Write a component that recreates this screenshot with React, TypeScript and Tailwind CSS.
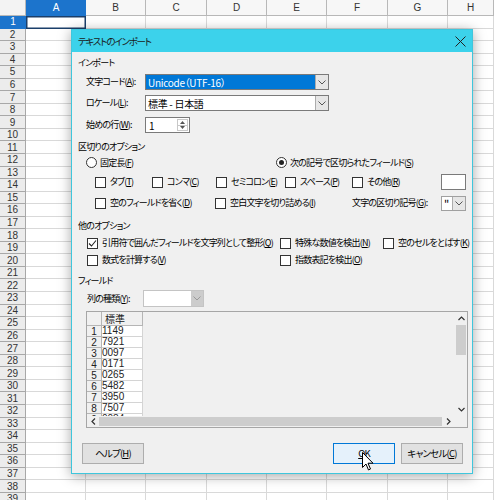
import React from 'react';

const cols = ['A', 'B', 'C', 'D', 'E', 'F', 'G', 'H'];
const rows = Array.from({ length: 39 }, (_, i) => i + 1);
const preview = ['1149', '7921', '0097', '0171', '0265', '5482', '3950', '7507', '0084'];

// アクセスキー付きラベル
const Key = ({ text, k, colon }: { text: string; k: string; colon?: boolean }) => (
  <span className="whitespace-nowrap">
    {text}(<u>{k}</u>){colon ? ':' : ''}
  </span>
);

const Chevron = ({ color = '#555' }: { color?: string }) => (
  <svg width="8" height="5" viewBox="0 0 8 5">
    <path d="M0.5 0.5 L4 4 L7.5 0.5" fill="none" stroke={color} strokeWidth="1" />
  </svg>
);

const CheckBox = ({ checked, children }: { checked?: boolean; children: React.ReactNode }) => (
  <div className="flex items-center gap-[4px]">
    <div className="w-[11px] h-[11px] border border-[#333] bg-white flex items-center justify-center shrink-0">
      {checked && (
        <svg width="9" height="9" viewBox="0 0 9 9">
          <path d="M1 4.5 L3.5 7 L8 1.5" fill="none" stroke="#222" strokeWidth="1.1" />
        </svg>
      )}
    </div>
    {children}
  </div>
);

const Radio = ({ checked, children }: { checked?: boolean; children: React.ReactNode }) => (
  <div className="flex items-center gap-[3px]">
    <div className="w-[11px] h-[11px] rounded-full border border-[#333] bg-white flex items-center justify-center shrink-0">
      {checked && <div className="w-[5px] h-[5px] rounded-full bg-[#222]" />}
    </div>
    {children}
  </div>
);

const Combo = ({ value, selected }: { value: string; selected?: boolean }) => (
  <div className="w-[184px] h-[16px] border border-[#7a7a7a] bg-white flex text-[10px] tracking-[-0.3px]">
    <div
      className={
        selected
          ? 'flex-1 bg-[#0078d7] text-white pl-[2px] flex items-center'
          : 'flex-1 bg-white pl-[2px] flex items-center'
      }
    >
      {value}
    </div>
    <div className="w-[13px] border-l border-[#acacac] bg-[#e6e6e6] flex items-center justify-center">
      <Chevron />
    </div>
  </div>
);

function Sheet() {
  return (
    <div className="grid grid-cols-[26px_60px_60px_61px_60px_60px_61px_60px_1fr] grid-rows-[16px_repeat(39,12.55px)] w-[494px] h-[500px] overflow-hidden bg-white text-[10px] text-[#333] font-['Liberation_Sans',sans-serif]">
      <div className="bg-[#f3f3f3] border-r border-b border-[#b8b8b8]" />
      {cols.map((c) => (
        <div
          key={c}
          className={
            c === 'A'
              ? 'bg-[#1c74cc] text-white flex items-center justify-center border-b border-[#1c74cc]'
              : 'bg-[#f7f7f7] flex items-center justify-center border-r border-b border-[#b8b8b8]'
          }
        >
          {c}
        </div>
      ))}
      {rows.map((r) => (
        <React.Fragment key={r}>
          <div
            className={
              r === 1
                ? 'bg-[#1c74cc] text-white flex items-center justify-center border-b border-[#1c74cc]'
                : 'bg-[#ececec] flex items-center justify-center border-r border-b border-[#a8a8a8]'
            }
          >
            {r}
          </div>
          {cols.map((c) => (
            <div
              key={c}
              className={
                r === 1 && c === 'A'
                  ? 'shadow-[inset_0_0_0_1.5px_#1b3f6a]'
                  : 'border-r border-b border-[#d9d9d9]'
              }
            />
          ))}
        </React.Fragment>
      ))}
    </div>
  );
}

function Preview() {
  return (
    <div className="ml-[14px] w-[382px] h-[117px] border border-[#a6a6a6] bg-[#f0f0f0] flex flex-col">
      <div className="flex flex-1 min-h-0">
        <div className="flex-1 overflow-hidden">
          <div className="grid grid-cols-[15px_41px] grid-rows-[14px_repeat(9,11px)] font-['Liberation_Sans',sans-serif] text-[10px] tracking-normal text-[#222]">
            <div className="bg-[#f0f0f0] border-r border-b border-[#b5b5b5]" />
            <div className="bg-[#f0f0f0] border-r border-b border-[#b5b5b5] pl-[3px] flex items-center font-['Noto_Sans_CJK_JP',sans-serif]">
              標準
            </div>
            {preview.map((v, i) => (
              <React.Fragment key={i}>
                <div className="bg-[#f0f0f0] border-r border-b border-[#b5b5b5] flex items-center justify-center leading-none pt-[2px]">
                  {i + 1}
                </div>
                <div className="bg-white border-r border-b border-[#d4d4d4] flex items-center leading-none">
                  {v}
                </div>
              </React.Fragment>
            ))}
          </div>
        </div>
        <div className="w-[12px] flex flex-col">
          <div className="h-[13px] flex items-center justify-center">
            <svg width="7" height="5" viewBox="0 0 7 5">
              <path d="M0.5 4 L3.5 1 L6.5 4" fill="none" stroke="#333" strokeWidth="1.2" />
            </svg>
          </div>
          <div className="h-[30px] bg-[#cdcdcd] mx-[1px]" />
          <div className="flex-1" />
          <div className="h-[13px] flex items-center justify-center">
            <svg width="7" height="5" viewBox="0 0 7 5">
              <path d="M0.5 1 L3.5 4 L6.5 1" fill="none" stroke="#333" strokeWidth="1.2" />
            </svg>
          </div>
        </div>
      </div>
      <div className="h-[11px] flex">
        <div className="w-[12px] flex items-center justify-center">
          <svg width="5" height="7" viewBox="0 0 5 7">
            <path d="M4 0.5 L1 3.5 L4 6.5" fill="none" stroke="#333" strokeWidth="1.2" />
          </svg>
        </div>
        <div className="flex-1 bg-[#cdcdcd] my-[1px]" />
        <div className="w-[13px] flex items-center justify-center">
          <svg width="5" height="7" viewBox="0 0 5 7">
            <path d="M1 0.5 L4 3.5 L1 6.5" fill="none" stroke="#333" strokeWidth="1.2" />
          </svg>
        </div>
        <div className="w-[12px]" />
      </div>
    </div>
  );
}

function ImportDialog() {
  return (
    <div className="absolute left-[71px] top-[29px] w-[402px] h-[445px] bg-[#f0f0f0] border border-[#3fc6dc] shadow-[0_2px_12px_rgba(0,0,0,0.35)] flex flex-col text-[9px] tracking-[-0.8px] text-black font-['Noto_Sans_CJK_JP',sans-serif] [font-feature-settings:'palt']">
      {/* タイトルバー */}
      <div className="h-[22px] bg-[#3cd2eb] flex items-center justify-between pl-[6px] pr-[6px] text-[9.5px] tracking-[-1.2px] text-[#1a1a1a]">
        <span>テキストのインポート</span>
        <svg width="11" height="11" viewBox="0 0 11 11">
          <path d="M0.5 0.5 L10.5 10.5 M10.5 0.5 L0.5 10.5" stroke="#222" strokeWidth="1" />
        </svg>
      </div>

      <div className="flex flex-col pt-[4px]">
        <div className="h-[14px] pl-[6px] flex items-center">インポート</div>

        <div className="mt-[4px] h-[16px] flex items-center">
          <div className="w-[73px] pl-[14px]">
            <Key text="文字コード" k="A" colon />
          </div>
          <Combo value="Unicode（UTF-16）" selected />
        </div>
        <div className="mt-[5px] h-[16px] flex items-center">
          <div className="w-[73px] pl-[14px]">
            <Key text="ロケール" k="L" colon />
          </div>
          <Combo value="標準 - 日本語" />
        </div>
        <div className="mt-[6px] h-[16px] flex items-center">
          <div className="w-[73px] pl-[14px]">
            <Key text="始めの行" k="W" colon />
          </div>
          <div className="w-[45px] h-[16px] border border-[#7a7a7a] bg-white flex text-[10px] tracking-normal">
            <div className="flex-1 pl-[3px] flex items-center">1</div>
            <div className="w-[11px] my-[1px] mr-[1px] flex flex-col border border-[#c8c8c8]">
              <div className="flex-1 flex items-center justify-center border-b border-[#c8c8c8]">
                <svg width="5" height="3" viewBox="0 0 5 3">
                  <path d="M0 3 L2.5 0 L5 3 Z" fill="#555" />
                </svg>
              </div>
              <div className="flex-1 flex items-center justify-center">
                <svg width="5" height="3" viewBox="0 0 5 3">
                  <path d="M0 0 L2.5 3 L5 0 Z" fill="#555" />
                </svg>
              </div>
            </div>
          </div>
        </div>

        <div className="mt-[7px] h-[14px] pl-[6px] flex items-center">区切りのオプション</div>
        <div className="mt-[1px] h-[15px] pl-[14px] grid grid-cols-[190px_1fr] items-center">
          <Radio>
            <Key text="固定長" k="F" />
          </Radio>
          <Radio checked>
            <Key text="次の記号で区切られたフィールド" k="S" />
          </Radio>
        </div>
        <div className="mt-[4px] h-[16px] pl-[23px] grid grid-cols-[57px_64px_69px_67px_89px_25px] items-center">
          <CheckBox>
            <Key text="タブ" k="T" />
          </CheckBox>
          <CheckBox>
            <Key text="コンマ" k="C" />
          </CheckBox>
          <CheckBox>
            <Key text="セミコロン" k="E" />
          </CheckBox>
          <CheckBox>
            <Key text="スペース" k="P" />
          </CheckBox>
          <CheckBox>
            <Key text="その他" k="R" />
          </CheckBox>
          <div className="h-[16px] border border-[#7a7a7a] bg-white" />
        </div>
        <div className="mt-[5px] h-[16px] pl-[23px] grid grid-cols-[120px_137px_89px_25px] items-center">
          <CheckBox>
            <Key text="空のフィールドを省く" k="D" />
          </CheckBox>
          <CheckBox>
            <Key text="空白文字を切り詰める" k="I" />
          </CheckBox>
          <Key text="文字の区切り記号" k="G" colon />
          <div className="h-[15px] border border-[#a0a0a0] bg-white flex">
            <div className="flex-1 pl-[2px] leading-[12px] text-[11px]">"</div>
            <div className="w-[13px] border-l border-[#acacac] bg-[#e6e6e6] flex items-center justify-center">
              <Chevron />
            </div>
          </div>
        </div>

        <div className="mt-[8px] h-[14px] pl-[6px] flex items-center">他のオプション</div>
        <div className="mt-[3px] h-[14px] pl-[15px] grid grid-cols-[193px_103px_1fr] items-center">
          <CheckBox checked>
            <Key text="引用符で囲んだフィールドを文字列として整形" k="Q" />
          </CheckBox>
          <CheckBox>
            <Key text="特殊な数値を検出" k="N" />
          </CheckBox>
          <CheckBox>
            <Key text="空のセルをとばす" k="K" />
          </CheckBox>
        </div>
        <div className="mt-[3px] h-[14px] pl-[15px] grid grid-cols-[193px_1fr] items-center">
          <CheckBox>
            <Key text="数式を計算する" k="V" />
          </CheckBox>
          <CheckBox>
            <Key text="指数表記を検出" k="O" />
          </CheckBox>
        </div>

        <div className="mt-[7px] h-[14px] pl-[6px] flex items-center">フィールド</div>
        <div className="mt-[2px] h-[17px] flex items-center">
          <div className="w-[71px] pl-[15px]">
            <Key text="列の種類" k="Y" colon />
          </div>
          <div className="w-[61px] h-[17px] border border-[#c4c4c4] bg-white flex">
            <div className="flex-1" />
            <div className="w-[12px] bg-[#cccccc] flex items-center justify-center">
              <Chevron color="#9a9a9a" />
            </div>
          </div>
        </div>

        <div className="mt-[4px]">
          <Preview />
        </div>

        <div className="mt-[15px] h-[21px] flex pl-[10px] pr-[9px] text-[9.5px]">
          <div className="w-[62px] border border-[#adadad] bg-[#e1e1e1] flex items-center justify-center">
            <Key text="ヘルプ" k="H" />
          </div>
          <div className="ml-auto w-[62px] border border-[#0078d7] bg-[#e5f1fb] flex items-center justify-center">
            <span>
              <u>O</u>K
            </span>
          </div>
          <div className="ml-[6px] w-[62px] border border-[#adadad] bg-[#e1e1e1] flex items-center justify-center">
            <Key text="キャンセル" k="C" />
          </div>
        </div>
      </div>
    </div>
  );
}

export default function App() {
  return (
    <div className="relative w-[494px] h-[500px] overflow-hidden">
      <Sheet />
      <ImportDialog />
      {/* マウスカーソル */}
      <svg className="absolute left-[362px] top-[452px]" width="12" height="19" viewBox="0 0 12 19">
        <path
          d="M0.5 0.5 L0.5 15.5 L4 12 L6.5 18 L8.5 17 L6 11.2 L11 11.2 Z"
          fill="#fff"
          stroke="#000"
          strokeWidth="1"
          strokeLinejoin="round"
        />
      </svg>
    </div>
  );
}
